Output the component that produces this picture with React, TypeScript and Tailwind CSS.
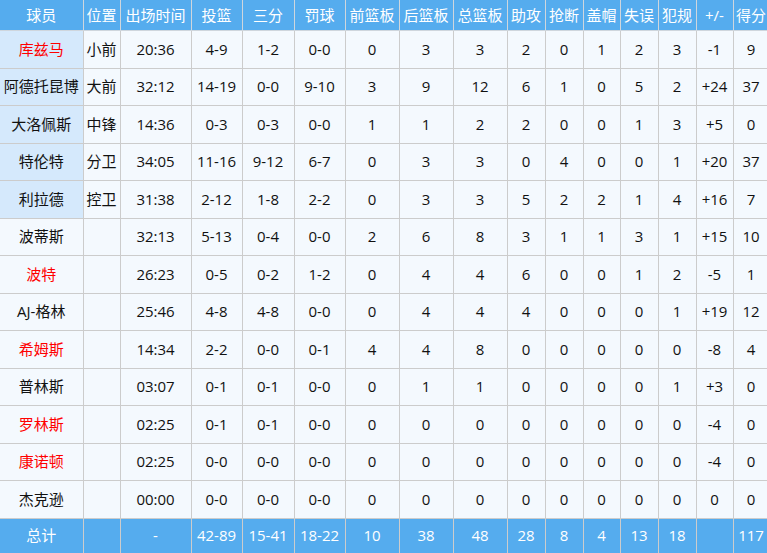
type Row = {
  name: string;
  pos: string;
  red?: boolean;
  starter?: boolean;
  stats: string[];
};

const headers = ['球员', '位置', '出场时间', '投篮', '三分', '罚球', '前篮板', '后篮板', '总篮板', '助攻', '抢断', '盖帽', '失误', '犯规', '+/-', '得分'];

const widths = ['w-[83px]', 'w-[37px]', 'w-[71px]', 'w-[51px]', 'w-[52px]', 'w-[51px]', 'w-[54px]', 'w-[54px]', 'w-[54px]', 'w-[38px]', 'w-[38px]', 'w-[37px]', 'w-[38px]', 'w-[38px]', 'w-[37px]', 'w-[36px]'];

const rows: Row[] = [
  { name: '库兹马', pos: '小前', red: true, starter: true, stats: ['20:36', '4-9', '1-2', '0-0', '0', '3', '3', '2', '0', '1', '2', '3', '-1', '9'] },
  { name: '阿德托昆博', pos: '大前', starter: true, stats: ['32:12', '14-19', '0-0', '9-10', '3', '9', '12', '6', '1', '0', '5', '2', '+24', '37'] },
  { name: '大洛佩斯', pos: '中锋', starter: true, stats: ['14:36', '0-3', '0-3', '0-0', '1', '1', '2', '2', '0', '0', '1', '3', '+5', '0'] },
  { name: '特伦特', pos: '分卫', starter: true, stats: ['34:05', '11-16', '9-12', '6-7', '0', '3', '3', '0', '4', '0', '0', '1', '+20', '37'] },
  { name: '利拉德', pos: '控卫', starter: true, stats: ['31:38', '2-12', '1-8', '2-2', '0', '3', '3', '5', '2', '2', '1', '4', '+16', '7'] },
  { name: '波蒂斯', pos: '', stats: ['32:13', '5-13', '0-4', '0-0', '2', '6', '8', '3', '1', '1', '3', '1', '+15', '10'] },
  { name: '波特', pos: '', red: true, stats: ['26:23', '0-5', '0-2', '1-2', '0', '4', '4', '6', '0', '0', '1', '2', '-5', '1'] },
  { name: 'AJ-格林', pos: '', stats: ['25:46', '4-8', '4-8', '0-0', '0', '4', '4', '4', '0', '0', '0', '1', '+19', '12'] },
  { name: '希姆斯', pos: '', red: true, stats: ['14:34', '2-2', '0-0', '0-1', '4', '4', '8', '0', '0', '0', '0', '0', '-8', '4'] },
  { name: '普林斯', pos: '', stats: ['03:07', '0-1', '0-1', '0-0', '0', '1', '1', '0', '0', '0', '0', '1', '+3', '0'] },
  { name: '罗林斯', pos: '', red: true, stats: ['02:25', '0-1', '0-1', '0-0', '0', '0', '0', '0', '0', '0', '0', '0', '-4', '0'] },
  { name: '康诺顿', pos: '', red: true, stats: ['02:25', '0-0', '0-0', '0-0', '0', '0', '0', '0', '0', '0', '0', '0', '-4', '0'] },
  { name: '杰克逊', pos: '', stats: ['00:00', '0-0', '0-0', '0-0', '0', '0', '0', '0', '0', '0', '0', '0', '0', '0'] },
];

const totals = ['总计', '', '-', '42-89', '15-41', '18-22', '10', '38', '48', '28', '8', '4', '13', '18', '', '117'];

export default function App() {
  return (
    <div
      className="w-[767px] h-[553px] overflow-hidden bg-[#f4f9fe]"
      style={{ fontFamily: '"Open Sans", "Noto Sans CJK SC", sans-serif' }}
    >
      <table className="table-fixed border-collapse w-[768px] text-[15px] leading-none text-center">
        <colgroup>
          {widths.map((w, i) => (
            <col key={i} className={w} />
          ))}
        </colgroup>
        <thead>
          <tr className="h-[30.5px] bg-[#55acee] text-white">
            {headers.map((h, i) => (
              <th
                key={h}
                className={`font-normal p-0 border border-t-0 border-[#cfd6dd] whitespace-nowrap ${i === 0 ? 'border-l-0' : ''}`}
              >
                {h}
              </th>
            ))}
          </tr>
        </thead>
        <tbody className="text-[#111]">
          {rows.map((r) => (
            <tr key={r.name} className="h-[37.5px]">
              <td
                className={`p-0 border border-l-0 border-[#cccccc] whitespace-nowrap ${r.starter ? 'bg-[#d5e9fc]' : 'bg-[#f4f9fe]'} ${r.red ? 'text-[#ff0000]' : ''}`}
              >
                {r.name}
              </td>
              <td className="p-0 border border-[#cccccc] whitespace-nowrap">{r.pos}</td>
              {r.stats.map((s, i) => (
                <td key={i} className="p-0 border border-[#cccccc] whitespace-nowrap">
                  {s}
                </td>
              ))}
            </tr>
          ))}
          <tr className="h-[35px] bg-[#55acee] text-white">
            {totals.map((t, i) => (
              <td
                key={i}
                className={`p-0 border border-b-0 border-[#cccccc] whitespace-nowrap ${i === 0 ? 'border-l-0' : ''}`}
              >
                {t}
              </td>
            ))}
          </tr>
        </tbody>
      </table>
    </div>
  );
}
